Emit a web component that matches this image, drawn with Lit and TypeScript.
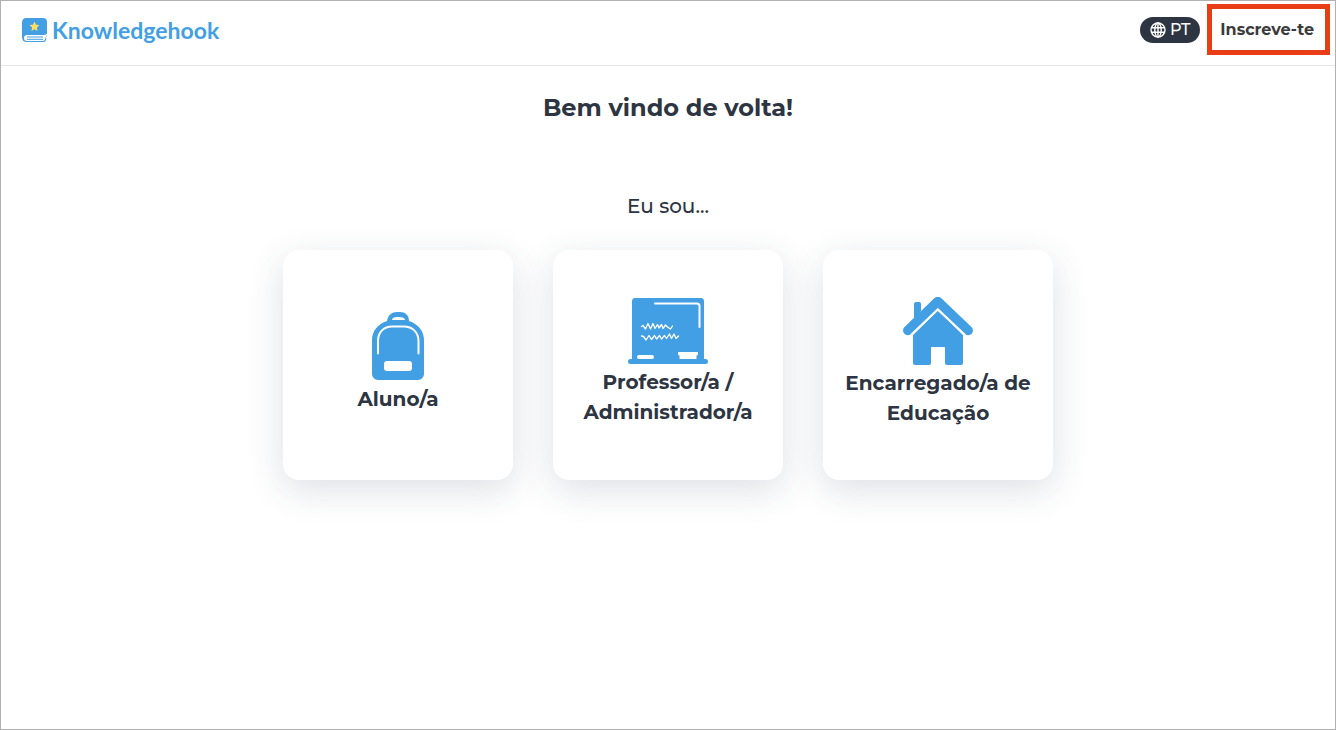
import { LitElement, html, css, TemplateResult } from "lit";
import { customElement } from "lit/decorators.js";

interface Role {
  label: string;
  icon: TemplateResult;
}

const backpack = html`<svg class="icon" width="54" height="70" viewBox="0 -1 54 70" aria-hidden="true">
  <path fill="currentColor" fill-rule="evenodd" d="M16 9C17 3 21 0 26 0h3c5 0 9 3 9 9 9 3 15 10 15 19v34c0 3-3 6-6 6H7c-3 0-6-3-6-6V28C1 19 7 12 16 9ZM21 8h13c0-2-3-3-6-3h-2c-3 0-5 1-5 3Z"/>
  <path d="M7 41.500V29C7 20 13 14.500 21 14.500h12C41 14.500 47.500 20 47.500 29v12.500" fill="none" stroke="#fff" stroke-width="2" stroke-linecap="round"/>
  <rect x="13" y="49" width="28" height="10" rx="3" fill="#fff"/>
</svg>`;

const board = html`<svg class="icon" width="80" height="66" viewBox="0 0 80 66" aria-hidden="true">
  <path fill="currentColor" d="M7 0h66c2 0 3 1.500 3 3v58h1.500a2.500 2.500 0 0 1 0 5h-75a2.500 2.500 0 0 1 0-5H4V3c0-1.500 1-3 3-3Z"/>
  <path d="M27 5.500h42q2.500 0 2.500 2.500v21" fill="none" stroke="#fff" stroke-width="2" stroke-linecap="round"/>
  <g fill="none" stroke="#fff" stroke-width="1.300" stroke-linecap="round" stroke-linejoin="round">
    <path d="M13.500 28.500 15 27.500 17.500 31 20 25.500 22.500 31 25 25.500 27 30.500 29.500 26.500 31 30 33.500 26.500 35 30.500 37.500 27 39.500 29 42.500 31 44.500 28"/>
    <path d="M13.500 38 15.500 38.500 18 42 21 37.500 23.500 41.500 26.500 37.500 28.500 41 31.500 37.500 33.500 41 36.500 37.500 38.500 40.500 41.500 36 43.500 40.500 46 36 48 40.500 50.500 38"/>
  </g>
  <rect x="9" y="57" width="17" height="4" rx="2" fill="#fff"/>
  <path fill="#fff" d="M50 54h20v3l-1.500.5V61h-17v-3.500L50 57Z"/>
</svg>`;

const house = html`<svg class="icon" width="70" height="68" viewBox="0 1 70 68" aria-hidden="true">
  <path fill="currentColor" d="M11 27V8q0-2 2-2h3q2 0 2 2v7Z"/>
  <path d="M4.800 34.500 34.800 5.500 65.200 34.500" fill="none" stroke="currentColor" stroke-width="9.500" stroke-linecap="round" stroke-linejoin="round"/>
  <path fill="currentColor" d="M34.800 14.500 60 39v28q0 2-2 2H44q-2 0-2-2V51H28v16q0 2-2 2H12q-2 0-2-2V39Z"/>
  <path d="M8 39 34.800 13.500 62 39" fill="none" stroke="#fff" stroke-width="2"/>
</svg>`;

const roles: Role[] = [
  { label: "Aluno/a", icon: backpack },
  { label: "Professor/a / Administrador/a", icon: board },
  { label: "Encarregado/a de Educação", icon: house },
];

@customElement("app-root")
export class AppRoot extends LitElement {
  static styles = css`
    :host {
      display: block;
      box-sizing: border-box;
      min-height: 100vh;
      border: 1px solid #b1b1b1;
      background: #fff;
      color: #2d3543;
      font-family: Montserrat, Inter, sans-serif;
    }
    .bar {
      display: flex;
      align-items: center;
      justify-content: space-between;
      padding: 3px 5px 10px 21px;
      border-bottom: 1px solid #e6e7e8;
    }
    .brand {
      display: flex;
      align-items: center;
      gap: 4px;
      color: #429fe3;
      font-family: Lato, sans-serif;
      font-size: 23px;
      font-weight: 700;
      line-height: 30px;
      text-decoration: none;
    }
    .actions {
      display: flex;
      align-items: center;
      gap: 7px;
    }
    .language {
      display: flex;
      align-items: center;
      gap: 4px;
      height: 26px;
      padding: 0 10px;
      border: 0;
      border-radius: 13px;
      background: #2d3543;
      color: #fff;
      font: inherit;
      font-size: 16px;
      font-weight: 500;
      cursor: pointer;
    }
    .signup {
      padding: 8px 11px 8px 8px;
      border: 5px solid #e93d18;
      color: #3b3b3b;
      font-size: 16px;
      font-weight: 700;
      line-height: 25px;
      text-decoration: none;
    }
    .content {
      display: flex;
      flex-direction: column;
      align-items: center;
      padding: 24px 20px;
    }
    .title {
      margin: 0;
      font-size: 24px;
      font-weight: 700;
      line-height: 36px;
    }
    .prompt {
      margin: 64px 0 28px;
      font-size: 20px;
      font-weight: 500;
      line-height: 32px;
    }
    .roles {
      display: flex;
      flex-wrap: wrap;
      justify-content: center;
      gap: 40px;
    }
    .role {
      display: flex;
      flex-direction: column;
      align-items: center;
      justify-content: center;
      gap: 3px;
      box-sizing: border-box;
      width: 230px;
      height: 230px;
      padding: 0 16px 5px;
      border: 0;
      border-radius: 16px;
      background: #fff;
      box-shadow: 0 10px 36px rgba(45, 60, 95, 0.16);
      color: inherit;
      font: inherit;
      font-size: 20px;
      font-weight: 700;
      line-height: 30px;
      cursor: pointer;
    }
    .icon {
      display: block;
      color: #429fe3;
    }
  `;

  render() {
    return html`
      <header class="bar">
        <a class="brand" href="#">
          <svg width="26" height="26" viewBox="0 0 26 26" aria-hidden="true">
            <path fill="#429fe3" d="M4.500 1h16.500q4 0 4 4v13q0 1.500-1 2v1q.5 4-3 4H5q-5 0-5-5V5.500Q0 1 4.500 1Z"/>
            <path fill="#fff" d="M5 18h17q1.500 0 3-1.500V18c-1.500 1.500-2 3.500-1.500 6H5a3 3 0 0 1 0-6Z"/>
            <path d="M5 20h16M5 22.300h16" stroke="#429fe3" stroke-width="1"/>
            <path d="M5 24.500h16q3 0 3-3" fill="none" stroke="#429fe3" stroke-width="1"/>
            <path fill="#ffe066" d="m12.500 4.500 1.500 3.200 3.500.4-2.600 2.400.7 3.500-3.100-1.700L9.400 14l.7-3.500-2.600-2.400 3.500-.4Z"/>
          </svg>
          <span>Knowledgehook</span>
        </a>
        <div class="actions">
          <button class="language" type="button">
            <svg width="16" height="16" viewBox="0 0 16 16" fill="none" stroke="currentColor" stroke-width="1.400" aria-hidden="true">
              <circle cx="8" cy="8" r="7"/>
              <ellipse cx="8" cy="8" rx="3.200" ry="7"/>
              <path d="M1 5.700h14M1 10.300h14M8 1v14"/>
            </svg>
            <span>PT</span>
          </button>
          <a class="signup" href="#">Inscreve-te</a>
        </div>
      </header>
      <main class="content">
        <h1 class="title">Bem vindo de volta!</h1>
        <h2 class="prompt">Eu sou...</h2>
        <div class="roles">
          ${roles.map(
            (role) => html`<button class="role" type="button">${role.icon}<span>${role.label}</span></button>`
          )}
        </div>
      </main>
    `;
  }
}
